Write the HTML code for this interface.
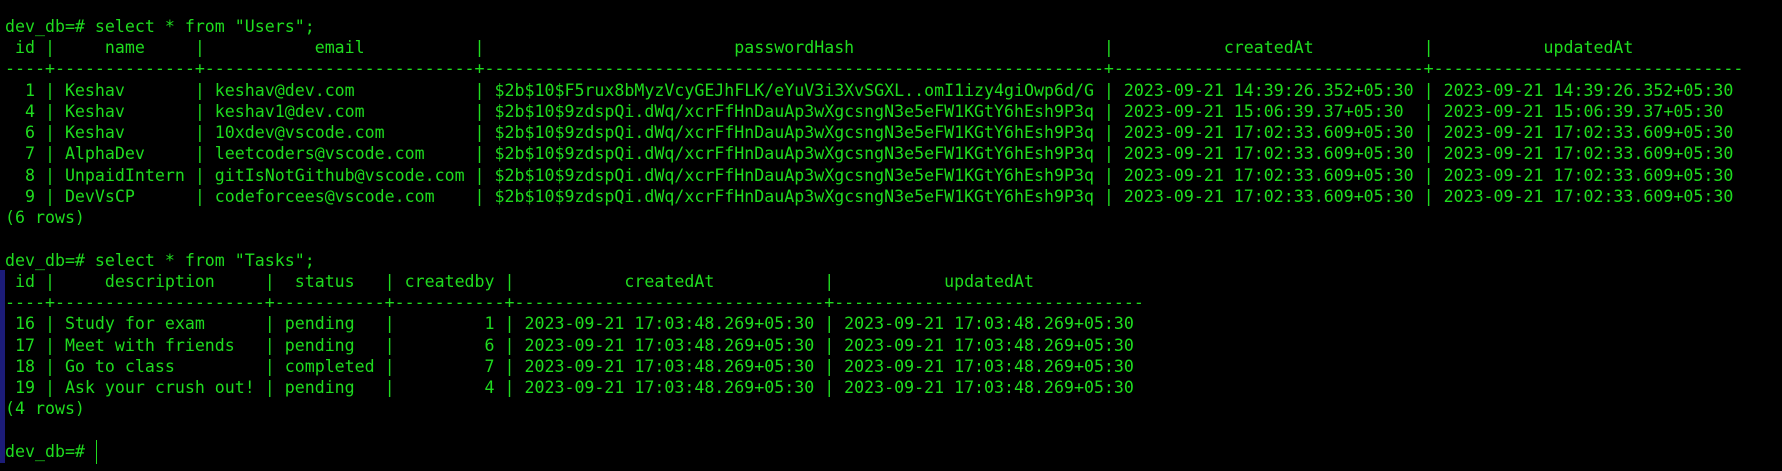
<!DOCTYPE html>
<html><head><meta charset="utf-8"><style>
html,body{margin:0;padding:0;background:#000;width:1782px;height:471px;overflow:hidden}
pre{position:absolute;left:5px;top:16px;margin:0;font-family:"DejaVu Sans Mono","Liberation Mono",monospace;font-size:16.6px;line-height:21.24px;color:#1fdc1f;white-space:pre}
.bar{position:absolute;left:0;top:270px;width:5px;height:193px;background:#1c1c78}
.cur{position:absolute;left:96px;top:440px;width:1px;height:24px;background:#1fdc1f}
</style></head><body>
<div class="bar"></div>
<pre>dev_db=# select * from "Users";
 id |     name     |           email           |                         passwordHash                         |           createdAt           |           updatedAt
----+--------------+---------------------------+--------------------------------------------------------------+-------------------------------+-------------------------------
  1 | Keshav       | keshav@dev.com            | $2b$10$F5rux8bMyzVcyGEJhFLK/eYuV3i3XvSGXL..omI1izy4giOwp6d/G | 2023-09-21 14:39:26.352+05:30 | 2023-09-21 14:39:26.352+05:30
  4 | Keshav       | keshav1@dev.com           | $2b$10$9zdspQi.dWq/xcrFfHnDauAp3wXgcsngN3e5eFW1KGtY6hEsh9P3q | 2023-09-21 15:06:39.37+05:30  | 2023-09-21 15:06:39.37+05:30
  6 | Keshav       | 10xdev@vscode.com         | $2b$10$9zdspQi.dWq/xcrFfHnDauAp3wXgcsngN3e5eFW1KGtY6hEsh9P3q | 2023-09-21 17:02:33.609+05:30 | 2023-09-21 17:02:33.609+05:30
  7 | AlphaDev     | leetcoders@vscode.com     | $2b$10$9zdspQi.dWq/xcrFfHnDauAp3wXgcsngN3e5eFW1KGtY6hEsh9P3q | 2023-09-21 17:02:33.609+05:30 | 2023-09-21 17:02:33.609+05:30
  8 | UnpaidIntern | gitIsNotGithub@vscode.com | $2b$10$9zdspQi.dWq/xcrFfHnDauAp3wXgcsngN3e5eFW1KGtY6hEsh9P3q | 2023-09-21 17:02:33.609+05:30 | 2023-09-21 17:02:33.609+05:30
  9 | DevVsCP      | codeforcees@vscode.com    | $2b$10$9zdspQi.dWq/xcrFfHnDauAp3wXgcsngN3e5eFW1KGtY6hEsh9P3q | 2023-09-21 17:02:33.609+05:30 | 2023-09-21 17:02:33.609+05:30
(6 rows)

dev_db=# select * from "Tasks";
 id |     description     |  status   | createdby |           createdAt           |           updatedAt
----+---------------------+-----------+-----------+-------------------------------+-------------------------------
 16 | Study for exam      | pending   |         1 | 2023-09-21 17:03:48.269+05:30 | 2023-09-21 17:03:48.269+05:30
 17 | Meet with friends   | pending   |         6 | 2023-09-21 17:03:48.269+05:30 | 2023-09-21 17:03:48.269+05:30
 18 | Go to class         | completed |         7 | 2023-09-21 17:03:48.269+05:30 | 2023-09-21 17:03:48.269+05:30
 19 | Ask your crush out! | pending   |         4 | 2023-09-21 17:03:48.269+05:30 | 2023-09-21 17:03:48.269+05:30
(4 rows)

dev_db=# </pre>
<div class="cur"></div>
</body></html>
